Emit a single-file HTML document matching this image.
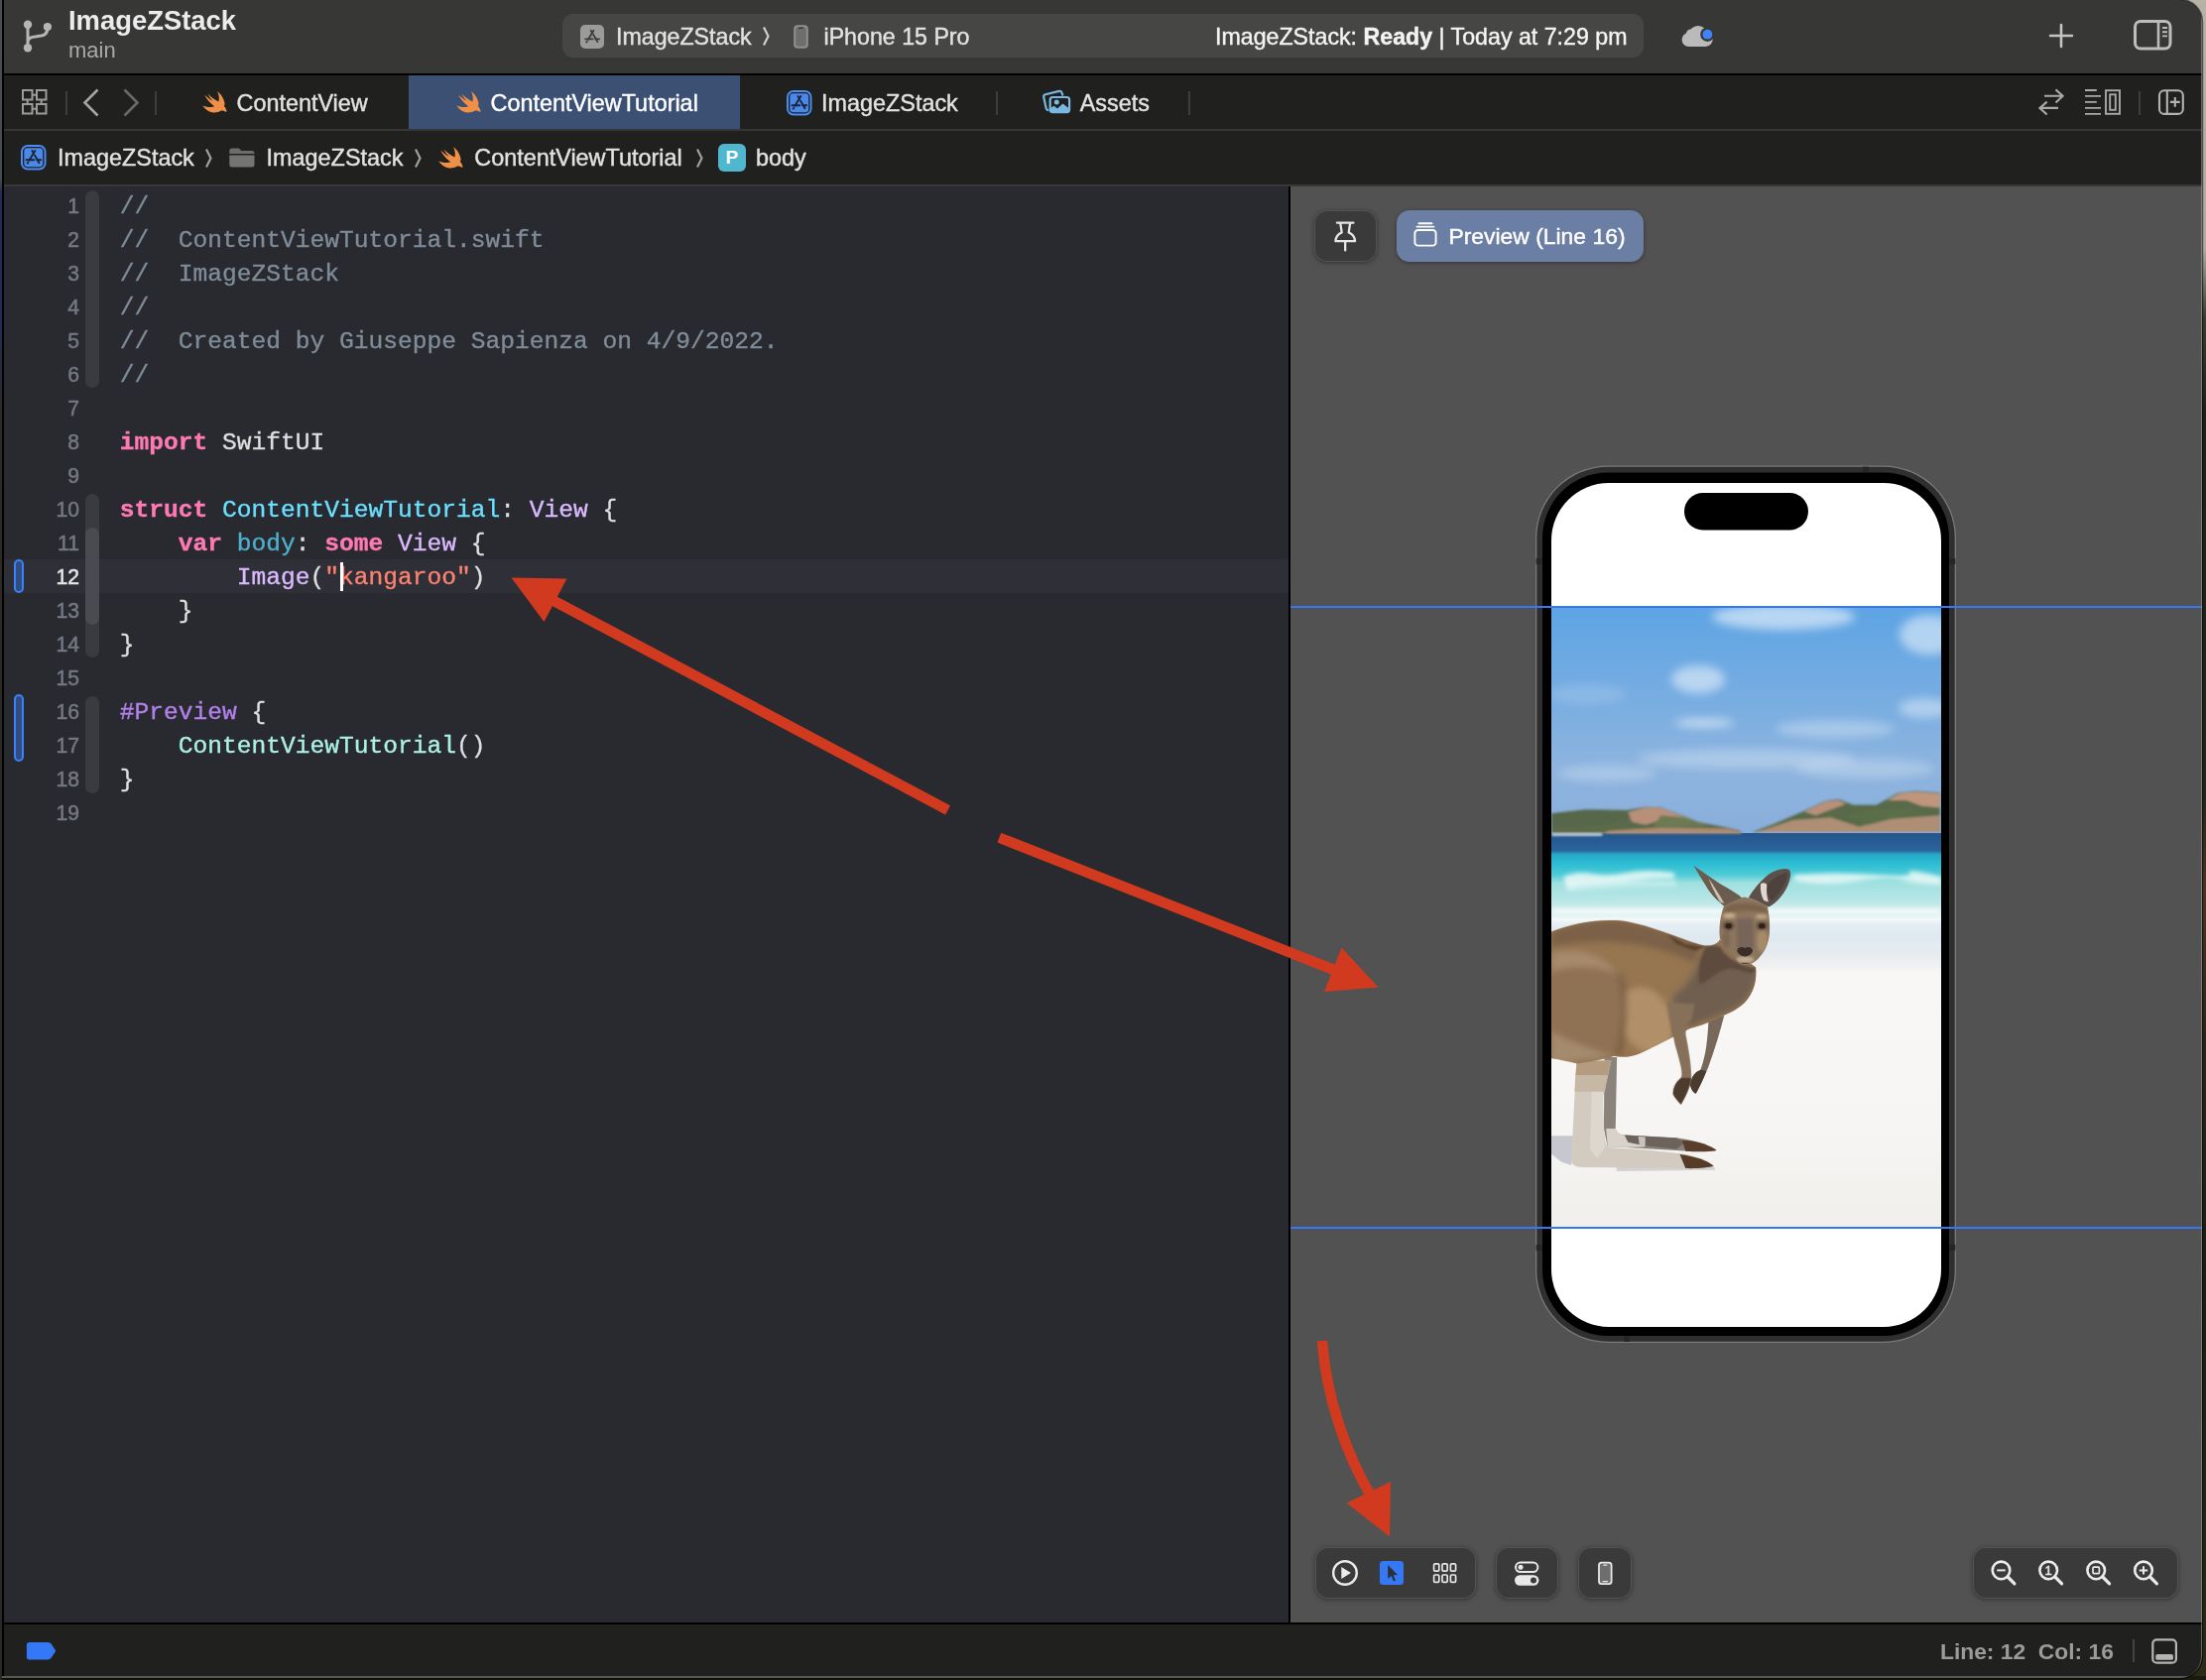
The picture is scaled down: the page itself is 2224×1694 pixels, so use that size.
<!DOCTYPE html>
<html lang="en">
<head>
<meta charset="utf-8">
<title>ImageZStack — ContentViewTutorial.swift</title>
<style>
*{box-sizing:border-box;margin:0;padding:0}
html,body{width:2224px;height:1694px;overflow:hidden;background:#000}
body{position:relative;font-family:"Liberation Sans",sans-serif;color:#dfdfdf}
.abs{position:absolute}
svg{position:absolute;overflow:visible}
.tx{position:absolute;white-space:pre;line-height:1}
#code,.tx,#pbadge,svg text{will-change:opacity}
#deskL{left:0;top:0;width:2px;height:1694px;background:linear-gradient(#4a4f53 0,#454b52 180px,#232c52 195px,#232c52 330px,#2e2a24 420px,#2a2825 100%)}
#deskR{left:2200px;top:0;width:24px;height:1694px;background:linear-gradient(#b7b2a6 0,#aeaa9e 250px,#3a3c30 320px,#1d2019 420px,#23251a 800px,#4a3420 900px,#2a2418 1050px,#1b1d15 1300px,#2b2a17 1694px)}
#deskB{left:0;top:1690px;width:2224px;height:4px;background:#1b1a10}
#win{left:0;top:0;width:2220px;height:1692px;background:#000;border-radius:0 22px 22px 0;overflow:hidden;box-shadow:0 0 0 1.2px rgba(0,0,0,.55)}
#winedge{left:-30px;top:-5px;width:2250px;height:1697px;border-radius:0 22px 22px 0;border-style:solid;border-color:rgba(170,170,170,.5);border-width:0 1.5px 0 0;pointer-events:none}
#toolbar{left:4px;top:0;width:2216px;height:73.6px;background:#373735}
#tabbar{left:4px;top:76px;width:2216px;height:54px;background:#20201f}
#tabline{left:4px;top:130px;width:2216px;height:2px;background:#363636}
#crumbs{left:4px;top:132px;width:2216px;height:54px;background:#20201f}
#crumbline{left:4px;top:186px;width:2216px;height:2px;background:#383838}
#editor{left:4px;top:188px;width:1295px;height:1448px;background:#292a30}
#canvas{left:1301px;top:188px;width:919px;height:1448px;background:#525252;overflow:hidden}
#status{left:4px;top:1638px;width:2216px;height:52px;background:#20201f}
#winbot{left:0;top:1690px;width:2220px;height:2px;background:#585858}

#code{left:0;top:0;width:2224px;height:1694px;font-family:"Liberation Mono",monospace;font-size:24.58px;color:#dfdfe0;white-space:pre;-webkit-text-stroke:.35px currentColor}
.ln{position:absolute;left:4px;height:34px;line-height:34px;width:1295px}
.ln .n{position:absolute;left:0;width:76px;text-align:right;color:#747880;font-size:22.5px;font-family:"Liberation Sans",sans-serif;transform:scaleX(.94);transform-origin:100% 50%;-webkit-text-stroke:.55px currentColor;top:-1.0px}
.ln .t{position:absolute;left:116.8px}
.ln.cur{background:#2f3037}
.ln.cur .n{color:#e6e6e6}
.c{color:#7f8c98}.k{color:#ff7ab2;font-weight:bold}.ty{color:#6bdfff}.sy{color:#dabaff}.pr{color:#4eb0cc}.st{color:#ff8170}.mc{color:#b281eb}.pj{color:#acf2e4}
.rib{position:absolute;left:86px;width:14px;border-radius:7px;background:#3a3b41}
.rib2{background:#4a4b50}
.chg{position:absolute;left:14px;width:10.2px;border:2.4px solid #3b82f6;border-radius:5.1px;background:#314c80}
#caret{position:absolute;width:3px;height:29px;background:#fff}

.t1{color:#e2e2e2;font-size:23.4px;-webkit-text-stroke:.4px currentColor}
#ttl{left:69px;top:7px;font-size:27.4px;font-weight:bold;color:#ececec}
#br{left:69px;top:39.5px;font-size:22px;color:#a9a9a7}
#pill{left:567px;top:14px;width:1090px;height:44px;border-radius:11px;background:#464644}
#acttab{left:412px;top:76px;width:334px;height:54px;background:#3c5073}
.sep{position:absolute;width:2px;height:24px;background:#3d3d3c}
.chev{position:absolute;font-size:22px;color:#9a9a98}
#pbadge{left:724px;top:145px;width:27.5px;height:27.5px;border-radius:6px;background:#4fb8cf;color:#fff;font-weight:bold;font-size:19px;text-align:center;line-height:27.5px}
#stat{color:#9b9b9a;font-size:22.8px;font-weight:bold}

.cbtn{position:absolute;background:#3a3a3a;border-radius:13px;box-shadow:0 0 0 1px rgba(255,255,255,.13) inset,0 1px 5px rgba(0,0,0,.4)}
#pvbtn{left:1408px;top:212px;width:249px;height:52px;border-radius:13px;background:#6b7fa5;box-shadow:0 1px 4px rgba(0,0,0,.35)}
.bl{position:absolute;left:1301px;width:919px;height:2px;background:#3478f6}
</style>
</head>
<body>
<div id="deskR" class="abs"></div>
<div id="deskB" class="abs"></div>
<div id="win" class="abs">
<div id="toolbar" class="abs"></div>
<div id="tabbar" class="abs"></div>
<div id="tabline" class="abs"></div>
<div id="crumbs" class="abs"></div>
<div id="crumbline" class="abs"></div>
<div id="editor" class="abs"><div class="abs" style="left:-4px;top:-188px;width:2224px;height:1694px">
<div id="code" class="abs">
<div class="ln cur" style="top:564.30px;height:33.6px"></div>
<div class="rib " style="top:192.0px;height:199.0px"></div>
<div class="rib " style="top:498.0px;height:165.3px"></div>
<div class="rib rib2" style="top:531.7px;height:97.9px"></div>
<div class="rib " style="top:702.0px;height:98.0px"></div>
<div class="ln" style="top:191.93px"><span class="n">1</span><span class="t"><span class="c">//</span></span></div>
<div class="ln" style="top:225.96px"><span class="n">2</span><span class="t"><span class="c">//  ContentViewTutorial.swift</span></span></div>
<div class="ln" style="top:259.99px"><span class="n">3</span><span class="t"><span class="c">//  ImageZStack</span></span></div>
<div class="ln" style="top:294.02px"><span class="n">4</span><span class="t"><span class="c">//</span></span></div>
<div class="ln" style="top:328.05px"><span class="n">5</span><span class="t"><span class="c">//  Created by Giuseppe Sapienza on 4/9/2022.</span></span></div>
<div class="ln" style="top:362.08px"><span class="n">6</span><span class="t"><span class="c">//</span></span></div>
<div class="ln" style="top:396.11px"><span class="n">7</span><span class="t"></span></div>
<div class="ln" style="top:430.14px"><span class="n">8</span><span class="t"><span class="k">import</span> SwiftUI</span></div>
<div class="ln" style="top:464.17px"><span class="n">9</span><span class="t"></span></div>
<div class="ln" style="top:498.20px"><span class="n">10</span><span class="t"><span class="k">struct</span> <span class="ty">ContentViewTutorial</span>: <span class="sy">View</span> {</span></div>
<div class="ln" style="top:532.23px"><span class="n">11</span><span class="t">    <span class="k">var</span> <span class="pr">body</span>: <span class="k">some</span> <span class="sy">View</span> {</span></div>
<div class="ln" style="top:566.26px"><span class="n" style='color:#e6e6e6'>12</span><span class="t">        <span class="sy">Image</span>(<span class="st">"kangaroo"</span>)</span></div>
<div class="ln" style="top:600.29px"><span class="n">13</span><span class="t">    }</span></div>
<div class="ln" style="top:634.32px"><span class="n">14</span><span class="t">}</span></div>
<div class="ln" style="top:668.35px"><span class="n">15</span><span class="t"></span></div>
<div class="ln" style="top:702.38px"><span class="n">16</span><span class="t"><span class="mc">#Preview</span> {</span></div>
<div class="ln" style="top:736.41px"><span class="n">17</span><span class="t">    <span class="pj">ContentViewTutorial</span>()</span></div>
<div class="ln" style="top:770.44px"><span class="n">18</span><span class="t">}</span></div>
<div class="ln" style="top:804.47px"><span class="n">19</span><span class="t"></span></div>
<div class="chg" style="top:564.3px;height:33.7px"></div>
<div class="chg" style="top:700.3px;height:67.7px"></div>
<div id="caret" style="left:342.6px;top:567.0px"></div>
</div>
</div></div>
<div id="canvas" class="abs"><div class="abs" style="left:-1301px;top:-188px;width:2224px;height:1694px">
<div class="cbtn" style="left:1325px;top:212px;width:63px;height:52px"></div>
<svg style="left:1340px;top:218px" width="32" height="40" viewBox="1340 218 32 40"><g fill="none" stroke="#e6e6e6" stroke-width="2.3" stroke-linejoin="round" stroke-linecap="round"><path d="M1347.9 224.6 H1364.5 M1351.2 224.6 L1352.7 234.4 C1349 236 1346.7 239 1346.4 243.2 H1366.1 C1365.8 239 1363.4 236 1359.7 234.4 L1361.2 224.6 M1356.2 243.2 V252.4"/></g></svg>
<div id="pvbtn" class="abs"></div>
<svg style="left:1425px;top:224px" width="24" height="25" viewBox="0 0 24 25"><g fill="none" stroke="#fff" stroke-width="1.9" stroke-linecap="round"><path d="M5.5 1.2 H18.5 M3.5 4.6 H20.5"/><rect x="1.4" y="8" width="21.2" height="15.6" rx="3.2"/></g></svg>
<div class="tx" style="left:1460.4px;top:226.5px;font-size:22.9px;color:#fff;-webkit-text-stroke:.4px #fff">Preview (Line 16)</div>
<svg style="left:1540px;top:462px" width="440" height="900" viewBox="1540 462 440 900">
<defs>
<linearGradient id="sky" x1="0" y1="0" x2="0" y2="1"><stop offset="0" stop-color="#5ea4e4"/><stop offset=".35" stop-color="#74ace2"/><stop offset=".7" stop-color="#8db4df"/><stop offset="1" stop-color="#8aaedb"/></linearGradient>
<linearGradient id="sea" x1="0" y1="0" x2="0" y2="1"><stop offset="0" stop-color="#25558d"/><stop offset=".125" stop-color="#2a649b"/><stop offset=".155" stop-color="#25a9c8"/><stop offset=".22" stop-color="#2cbdd3"/><stop offset=".30" stop-color="#4fcbd6"/><stop offset=".36" stop-color="#9fe0e0"/><stop offset=".48" stop-color="#b8e6e6"/><stop offset=".58" stop-color="#d3edee"/><stop offset=".62" stop-color="#f4f8f8"/><stop offset=".68" stop-color="#dde9f0"/><stop offset=".82" stop-color="#e0e8ef"/><stop offset=".95" stop-color="#f0f0f1"/><stop offset="1" stop-color="#f8f7f6"/></linearGradient>
<linearGradient id="sand" x1="0" y1="0" x2="0" y2="1"><stop offset="0" stop-color="#f8f7f6"/><stop offset=".6" stop-color="#f6f5f3"/><stop offset="1" stop-color="#f1efec"/></linearGradient>
<linearGradient id="fur" x1="0" y1="0" x2="0" y2="1"><stop offset="0" stop-color="#8a6a4b"/><stop offset=".5" stop-color="#96744f"/><stop offset="1" stop-color="#a78a68"/></linearGradient>
<filter id="b2" x="-20%" y="-20%" width="140%" height="140%"><feGaussianBlur stdDeviation="2"/></filter>
<filter id="b4" x="-30%" y="-30%" width="160%" height="160%"><feGaussianBlur stdDeviation="5"/></filter>
<filter id="hb" x="-5%" y="-20%" width="110%" height="140%"><feGaussianBlur stdDeviation="5"/></filter>
<filter id="b1" x="-10%" y="-10%" width="120%" height="120%"><feGaussianBlur stdDeviation="0.7"/></filter>
<clipPath id="scr"><rect x="1564" y="487" width="393" height="851" rx="58"/></clipPath>
<clipPath id="pho"><rect x="1564" y="613" width="393" height="624"/></clipPath>
</defs>
<rect x="1548" y="469.5" width="424" height="884.5" rx="73" fill="#7a7a7a"/>
<rect x="1549.3" y="470.8" width="421.4" height="881.9" rx="71.7" fill="#2f2f2f"/>
<rect x="1555" y="476.5" width="410" height="870.5" rx="66" fill="#000"/>
<rect x="1548.6" y="563" width="6" height="6" fill="#262626"/><rect x="1965.4" y="563" width="6" height="6" fill="#262626"/>
<rect x="1548.6" y="1255" width="6" height="6" fill="#262626"/><rect x="1878" y="470.6" width="6" height="5.6" fill="#262626"/><rect x="1637" y="1347.4" width="6" height="5.6" fill="#262626"/><rect x="1965.4" y="1255" width="6" height="6" fill="#262626"/>
<rect x="1564" y="487" width="393" height="851" rx="58" fill="#fff"/>
<rect x="1698" y="497" width="125" height="37.5" rx="18.7" fill="#000"/>
<g clip-path="url(#pho)">
<rect x="1564" y="613" width="393" height="228" fill="url(#sky)"/>
<g filter="url(#b4)" fill="#fff">
<ellipse cx="1798" cy="622" rx="72" ry="13" opacity=".55"/>
<ellipse cx="1945" cy="640" rx="30" ry="20" opacity=".5"/>
<ellipse cx="1712" cy="685" rx="27" ry="14" opacity=".5"/>
<ellipse cx="1718" cy="729" rx="30" ry="4" opacity=".6"/>
<ellipse cx="1940" cy="714" rx="26" ry="10" opacity=".4"/>
<ellipse cx="1850" cy="735" rx="60" ry="9" opacity=".3"/>
<ellipse cx="1760" cy="765" rx="110" ry="10" opacity=".28"/>
<ellipse cx="1620" cy="780" rx="50" ry="8" opacity=".25"/>
<ellipse cx="1880" cy="775" rx="70" ry="10" opacity=".25"/>
<ellipse cx="1600" cy="700" rx="40" ry="10" opacity=".15"/>
</g>
<rect x="1564" y="840" width="393" height="140" fill="url(#sea)"/>
<rect x="1564" y="979.5" width="393" height="258" fill="url(#sand)"/>
<g transform="translate(1560 605) scale(.190476)" filter="url(#hb)">
<path d="M22 1130 L200 1110 L420 1112 L520 1095 L600 1098 L700 1135 L800 1175 L950 1205 L1020 1222 L1030 1236 L22 1236 Z" fill="#5a6b4c"/>
<path d="M420 1125 L520 1098 L600 1100 L700 1138 L780 1172 L700 1180 L600 1165 L520 1190 L450 1175 Z" fill="#b8907a"/>
<path d="M320 1222 L600 1205 L950 1210 L1020 1225 L1030 1237 L300 1237 Z" fill="#ad8b72"/>
<path d="M22 1130 L200 1110 L420 1112 L440 1150 L300 1190 L22 1200 Z" fill="#566848"/>
<path d="M600 1140 L720 1150 L860 1195 L700 1200 L560 1200 Z" fill="#6d7a52"/>
<path d="M22 1236 H290 V1248 H22 Z" fill="#e8eef0"/>
<path d="M1085 1228 L1200 1185 L1350 1120 L1470 1065 L1540 1055 L1620 1085 L1740 1085 L1860 1020 L1950 1012 L2078 1020 L2078 1228 Z" fill="#586b49"/>
<path d="M1360 1120 L1470 1068 L1540 1060 L1580 1080 L1500 1110 L1420 1140 Z" fill="#b9917a"/>
<path d="M1800 1060 L1870 1022 L1950 1015 L2078 1024 L2078 1100 L1980 1090 L1900 1060 Z" fill="#bf967d"/>
<path d="M1150 1215 L1300 1165 L1500 1150 L1650 1200 L1800 1160 L2078 1140 L2078 1228 L1100 1228 Z" fill="#b8927a" opacity=".9"/>
<path d="M1560 1150 L1700 1110 L1900 1100 L2000 1130 L1850 1150 L1700 1190 Z" fill="#5a6e4a"/>
</g>
<g filter="url(#b2)" fill="#e4f7f5">
<path d="M1576 884 Q1590 878 1605 881 T1640 880 T1688 880 L1688 886 Q1660 886 1640 889 T1605 892 T1580 897 Z" opacity=".9"/>
<path d="M1580 892 Q1620 888 1690 888 L1690 894 Q1630 894 1582 899 Z" opacity=".5"/>
<path d="M1808 882 Q1850 879 1890 882 T1925 880 T1957 884 V892 Q1935 892 1920 888 T1870 889 T1808 888 Z" opacity=".9"/>
<rect x="1564" y="915.5" width="393" height="7" fill="#f4fafa" opacity=".85"/>
<rect x="1564" y="935" width="393" height="3" fill="#f4f8fb" opacity=".5"/>
<rect x="1780" y="952" width="177" height="3" fill="#f6f9fb" opacity=".5"/>
</g>
<g transform="translate(1560 850) scale(.232198)">
<defs>
<clipPath id="bodyc"><path d="M17 935 L17 385 C120 345 250 325 350 342 C450 360 560 410 660 440 C700 452 735 445 748 420 L905 540 C910 600 895 650 860 690 C830 720 790 740 765 748 C720 775 660 795 620 805 C560 835 470 880 400 915 C360 932 320 932 290 925 C250 940 180 952 130 958 C90 950 50 938 17 935 Z"/></clipPath>
<filter id="sb" x="-30%" y="-30%" width="160%" height="160%"><feGaussianBlur stdDeviation="14"/></filter>
<filter id="sb2" x="-30%" y="-30%" width="160%" height="160%"><feGaussianBlur stdDeviation="5"/></filter>
<filter id="sb3" x="-10%" y="-10%" width="120%" height="120%"><feGaussianBlur stdDeviation="2.2"/></filter>
</defs>
<g filter="url(#sb3)">
<path d="M17 1272 L112 1272 L104 1400 L60 1385 L17 1350 Z" fill="#c6c8cf"/>
<path d="M300 1395 L720 1400 L730 1420 L300 1425 Z" fill="#d2d2d5"/>
<path d="M248 930 L302 930 L296 1240 C300 1262 320 1268 340 1268 L560 1280 C640 1290 710 1315 735 1335 C700 1342 640 1340 560 1335 L340 1322 L262 1322 L245 1240 Z" fill="#8a837b"/>
<path d="M255 1240 L296 1240 C300 1262 320 1268 340 1268 L420 1275 L420 1320 L262 1322 Z" fill="#d8d2c8"/>
<path d="M335 1268 L560 1281 L600 1300 L560 1330 L420 1315 L350 1300 Z" fill="#6c645c"/>
<path d="M395 1275 L425 1277 L425 1318 L400 1315 Z" fill="#c9c2b8"/>
<path d="M585 1292 C650 1290 710 1315 735 1335 C700 1342 650 1342 600 1338 Z" fill="#5a3d2a"/>
<path d="M128 945 L118 1100 L108 1300 L103 1375 C105 1400 125 1408 150 1408 L590 1413 C650 1415 700 1410 722 1403 C700 1380 650 1362 590 1350 L420 1332 L262 1322 C245 1300 240 1200 242 1100 L278 945 Z" fill="#d3cbbf"/>
<path d="M185 960 L192 1100 L185 1330 L215 1370 L250 1322 L240 1100 L268 960 Z" fill="#e2dcd3" opacity=".7"/>
<path d="M128 945 L278 945 L262 1010 L122 1010 Z" fill="#b49c80"/><path d="M122 1010 L262 1010 L250 1080 L118 1080 Z" fill="#c6b8a4"/>
<path d="M575 1352 C640 1360 700 1380 722 1403 C700 1410 650 1415 600 1413 Z" fill="#573a27"/>
<path d="M700 770 C695 850 690 920 665 985 C645 995 628 1005 620 1050 C625 1075 635 1085 645 1088 C660 1060 680 1020 700 970 C725 900 750 820 768 748 Z" fill="#77675a"/>
<path d="M665 985 C645 995 628 1005 620 1050 C625 1075 635 1085 645 1088 C660 1060 680 1020 690 990 Z" fill="#4a3a2f"/>
</g>
<g filter="url(#sb3)">
<path d="M17 935 L17 385 C120 345 250 325 350 342 C450 360 560 410 660 440 C700 452 735 445 748 420 L905 540 C910 600 895 650 860 690 C830 720 790 740 765 748 C720 775 660 795 620 805 C560 835 470 880 400 915 C360 932 320 932 290 925 C250 940 180 952 130 958 C90 950 50 938 17 935 Z" fill="#957651"/>
</g>
<g clip-path="url(#bodyc)">
<g filter="url(#sb)">
<path d="M17 385 C120 345 250 325 350 342 C450 360 560 410 660 440 L640 520 C500 450 300 400 17 450 Z" fill="#7c6046"/>
<ellipse cx="430" cy="770" rx="110" ry="150" fill="#b19069" transform="rotate(-25 430 770)"/>
<path d="M17 480 C120 460 250 490 300 570 C335 650 320 800 290 925 L17 935 Z" fill="#8f7152"/>
<path d="M17 480 C120 450 250 480 300 570 C250 540 120 520 17 560 Z" fill="#a68a6c"/>
<path d="M17 820 C100 860 200 900 290 925 L17 960 Z" fill="#a58b6e"/>
<path d="M300 560 C335 650 325 800 292 925 L320 925 C350 800 350 650 330 580 Z" fill="#7b5f45"/>
<path d="M690 440 C730 450 750 440 760 470 C780 500 850 540 915 545 C905 610 880 670 830 710 C780 740 700 760 640 790 C560 820 520 700 560 650 C640 600 660 500 690 440 Z" fill="#6f5e50"/>
</g>
<g filter="url(#sb2)">
<path d="M690 450 C730 450 750 440 760 470 C780 500 850 540 905 545 C900 580 860 560 800 545 C740 545 700 610 660 610 C650 540 670 480 690 450 Z" fill="#5f4c3d"/>
<path d="M520 395 L600 440 L690 450 L640 468 L560 438 Z" fill="#59432f"/>
<path d="M520 690 C525 760 540 820 555 880 L600 830 C600 800 610 780 625 770 L640 700 Z" fill="#86705a"/>
</g>
</g>
<g filter="url(#sb3)">
<path d="M540 800 C545 830 550 860 555 880 C575 950 590 1000 580 1020 C560 1035 545 1060 545 1090 C555 1110 570 1125 580 1135 C600 1100 620 1060 625 1020 C625 960 610 880 600 830 C600 810 605 795 612 785 Z" fill="#86705a"/>
<path d="M580 1020 C560 1035 545 1060 545 1090 C555 1110 570 1125 580 1135 C600 1100 620 1060 625 1020 Z" fill="#4e3b2d"/>
</g>
</g>
<g transform="translate(1690 860) scale(.0774)">
<defs><filter id="hf" x="-10%" y="-10%" width="120%" height="120%"><feGaussianBlur stdDeviation="9"/></filter><filter id="hf2" x="-20%" y="-20%" width="140%" height="140%"><feGaussianBlur stdDeviation="22"/></filter><clipPath id="hc"><path d="M620 690 C700 640 800 600 880 575 C960 590 1100 640 1185 695 C1210 800 1225 950 1212 1060 C1200 1180 1150 1290 1090 1350 C1040 1420 960 1465 890 1462 C820 1455 780 1400 760 1350 C680 1300 600 1220 570 1120 C550 1000 570 820 620 690 Z"/></clipPath></defs>
<g filter="url(#hf)">
<path d="M225 160 C300 220 480 340 600 420 C700 480 800 530 870 600 C800 640 700 680 620 690 C540 630 440 530 380 420 C320 320 260 230 225 160 Z" fill="#6b5b50"/>
<path d="M420 330 C480 420 560 540 625 660 L570 640 C520 560 460 440 420 330 Z" fill="#cdbfb2"/>
<path d="M940 585 C1000 480 1100 360 1200 280 C1300 215 1400 190 1470 215 C1510 260 1480 400 1400 520 C1330 620 1260 680 1200 705 C1120 660 1020 610 940 585 Z" fill="#5d5048"/>
<path d="M1180 420 C1260 330 1380 260 1450 260 C1450 360 1380 500 1250 620 C1200 600 1180 500 1180 420 Z" fill="#4d433d"/>
<path d="M1100 400 C1140 380 1170 390 1180 420 C1170 500 1180 580 1200 640 L1140 620 C1100 540 1090 460 1100 400 Z" fill="#e1d8cf"/>
<path d="M620 690 C700 640 800 600 880 575 C960 590 1100 640 1185 695 C1210 800 1225 950 1212 1060 C1200 1180 1150 1290 1090 1350 C1040 1420 960 1465 890 1462 C820 1455 780 1400 760 1350 C680 1300 600 1220 570 1120 C550 1000 570 820 620 690 Z" fill="#8c745d"/>
</g>
<g clip-path="url(#hc)"><g filter="url(#hf2)">
<path d="M640 700 C760 640 1000 640 1170 710 L1180 790 C1000 740 800 740 620 790 Z" fill="#7a624c"/>
<ellipse cx="690" cy="820" rx="85" ry="34" fill="#c6ae8c"/>
<ellipse cx="1110" cy="830" rx="80" ry="32" fill="#bfa684"/>
<path d="M790 860 L1000 860 L1010 1250 L790 1250 Z" fill="#78655a"/>
<ellipse cx="1120" cy="1150" rx="70" ry="150" fill="#a68b69"/>
<ellipse cx="650" cy="1130" rx="50" ry="120" fill="#7d6855"/>
<ellipse cx="895" cy="1390" rx="120" ry="40" fill="#c2ae97"/>
<ellipse cx="680" cy="950" rx="75" ry="60" fill="#5d4a3b"/><ellipse cx="1115" cy="950" rx="75" ry="60" fill="#5d4a3b"/>
</g></g>
<g filter="url(#hf)">
<ellipse cx="680" cy="952" rx="42" ry="36" fill="#2f241d"/>
<ellipse cx="1115" cy="952" rx="42" ry="36" fill="#2f241d"/>
<path d="M790 1270 C800 1230 860 1215 895 1240 C930 1215 985 1230 995 1270 C990 1320 940 1350 895 1350 C850 1350 800 1320 790 1270 Z" fill="#3a2d29"/>
<path d="M850 1440 L940 1440" stroke="#5a473b" stroke-width="14"/>
</g>
</g>

</g>
</svg>
<div class="bl" style="top:611px"></div>
<div class="bl" style="top:1237px"></div>
<div class="cbtn" style="left:1325.5px;top:1560px;width:162.5px;height:52px"></div>
<div class="cbtn" style="left:1508px;top:1560px;width:63px;height:52px"></div>
<div class="cbtn" style="left:1591px;top:1560px;width:54px;height:52px"></div>
<div class="cbtn" style="left:1988.5px;top:1560px;width:207px;height:52px"></div>
<svg style="left:1325px;top:1560px" width="330" height="52" viewBox="1325 1560 330 52">
<circle cx="1356" cy="1586" r="11.8" fill="none" stroke="#ebebeb" stroke-width="2.4"/><path d="M1352.3 1580 L1362 1586 L1352.3 1592 Z" fill="#ebebeb"/>
<rect x="1391" y="1574" width="24" height="24" rx="3.5" fill="#3478f6"/>
<path d="M1399.2 1578 L1399.2 1592 L1402.6 1589 L1405 1594.6 L1407 1593.7 L1404.7 1588.3 L1409 1588 Z" fill="#2b2f3a"/>
<g fill="none" stroke="#e6e6e6" stroke-width="1.7"><rect x="1445.6" y="1576.8" width="5.2" height="7.4" rx="1.2"/><rect x="1454" y="1576.8" width="5.2" height="7.4" rx="1.2"/><rect x="1462.4" y="1576.8" width="5.2" height="7.4" rx="1.2"/><rect x="1445.6" y="1588" width="5.2" height="7.4" rx="1.2"/><rect x="1454" y="1588" width="5.2" height="7.4" rx="1.2"/><rect x="1462.4" y="1588" width="5.2" height="7.4" rx="1.2"/></g>
<rect x="1528" y="1575.5" width="22.4" height="9.6" rx="4.8" fill="none" stroke="#e8e8e8" stroke-width="2"/><circle cx="1533" cy="1580.3" r="2.5" fill="#e8e8e8"/>
<rect x="1527" y="1588.3" width="24.4" height="10.4" rx="5.2" fill="#e8e8e8"/><circle cx="1546" cy="1593.5" r="3" fill="#3a3a3a"/>
<rect x="1612" y="1575.6" width="12.6" height="21.6" rx="2.6" fill="#6e6e6e" stroke="#e8e8e8" stroke-width="1.8"/><path d="M1616.4 1578.2 H1620.2 M1615.6 1594.6 H1621" stroke="#e8e8e8" stroke-width="1.2"/>
</svg>
<svg style="left:1988px;top:1560px" width="208" height="52" viewBox="1988 1560 208 52"><g><circle cx="2017.5" cy="1583.4" r="8.8" fill="none" stroke="#ebebeb" stroke-width="2.6"/><path d="M2024.1 1590 L2030.9 1596.8" stroke="#ebebeb" stroke-width="3.2" stroke-linecap="round"/><path d="M2013.3 1583.4 H2021.7" stroke="#ebebeb" stroke-width="2"/></g><g><circle cx="2065.2" cy="1583.4" r="8.8" fill="none" stroke="#ebebeb" stroke-width="2.6"/><path d="M2071.7999999999997 1590 L2078.6 1596.8" stroke="#ebebeb" stroke-width="3.2" stroke-linecap="round"/><text x="2065.1" y="1588.2" text-anchor="middle" font-family="Liberation Sans, sans-serif" font-size="13" fill="#ebebeb" stroke="#ebebeb" stroke-width=".4" text-rendering="geometricPrecision">1</text></g><g><circle cx="2113.2" cy="1583.4" r="8.8" fill="none" stroke="#ebebeb" stroke-width="2.6"/><path d="M2119.7999999999997 1590 L2126.6 1596.8" stroke="#ebebeb" stroke-width="3.2" stroke-linecap="round"/><rect x="2110" y="1580.2" width="6.4" height="6.4" rx="1" fill="none" stroke="#ebebeb" stroke-width="1.7"/></g><g><circle cx="2161" cy="1583.4" r="8.8" fill="none" stroke="#ebebeb" stroke-width="2.6"/><path d="M2167.6 1590 L2174.4 1596.8" stroke="#ebebeb" stroke-width="3.2" stroke-linecap="round"/><path d="M2156.8 1583.4 H2165.2 M2161 1579.2 V1587.6" stroke="#ebebeb" stroke-width="2"/></g></svg>
</div></div>
<div id="status" class="abs"></div>
<div id="winbot" class="abs"></div>
<svg style="left:20px;top:18px" width="36" height="38" viewBox="20 18 36 38"><g fill="#b6b6b4"><circle cx="28" cy="24.7" r="4.2"/><circle cx="47.9" cy="27.1" r="4.1"/><circle cx="28" cy="48.2" r="4.2"/></g><path d="M28 25 V48 M28 43 C28 37.5 32 37.3 38 36.6 C44 36 47.9 35 47.9 28" fill="none" stroke="#b6b6b4" stroke-width="3"/></svg>
<div id="ttl" class="tx">ImageZStack</div>
<div id="br" class="tx">main</div>
<div id="pill" class="abs"></div>
<svg style="left:584.5px;top:24.5px" width="24" height="24" viewBox="0 0 26 26"><rect x="0" y="0" width="26" height="26" rx="5.5" fill="#9b9b99"/><g stroke="#3b3b3a" stroke-width="1.9" stroke-linecap="round" fill="none"><path d="M14.6 6.2 L8.6 16"/><path d="M11.6 6.2 L13 8.4"/><path d="M14.2 10.6 L18.8 18.6"/><path d="M5.6 15.6 H13.6"/><path d="M16.6 15.6 H20.6"/><path d="M7.4 18.2 L6.8 19"/></g></svg>
<div class="tx t1" style="left:621px;top:26px;font-size:23.2px">ImageZStack</div>
<svg style="left:768px;top:26px" width="9" height="21" viewBox="0 0 9 21"><path d="M2 1.5 L6.5 10.5 L2 19.5" fill="none" stroke="#d0d0ce" stroke-width="2.2"/></svg>
<svg style="left:800px;top:25px" width="15" height="24" viewBox="0 0 15 24"><rect x="1.2" y="1.2" width="12.6" height="21.6" rx="3" fill="#6e6e6c" stroke="#90908e" stroke-width="2"/><rect x="5" y="2.4" width="5" height="1.6" rx=".8" fill="#373735"/></svg>
<div class="tx t1" style="left:830.5px;top:26px;font-size:23.2px">iPhone 15 Pro</div>
<div class="tx t1" id="stt" style="left:1225px;top:26px;font-size:23.2px;color:#f4f4f4">ImageZStack: <b>Ready</b> | Today at 7:29 pm</div>
<svg style="left:1694px;top:22px" width="36" height="28" viewBox="1694 22 36 28"><g fill="#bababa"><circle cx="1702.6" cy="40" r="7"/><circle cx="1712" cy="35.2" r="9.3"/><circle cx="1704.6" cy="34" r="4.6"/><circle cx="1719.4" cy="39.6" r="7.4"/><rect x="1702.6" y="40" width="16.8" height="7"/></g><circle cx="1721.4" cy="34.7" r="7.2" fill="#373735"/><circle cx="1721.4" cy="34.7" r="4.9" fill="#3f84f7"/></svg>
<svg style="left:2066px;top:24px" width="24" height="24" viewBox="0 0 24 24"><path d="M12 1 V23 M1 12 H23" stroke="#c4c4c2" stroke-width="2.6" stroke-linecap="round"/></svg>
<svg style="left:2150px;top:19px" width="41" height="33" viewBox="2150 19 41 33"><rect x="2152.5" y="21.5" width="35.5" height="27.5" rx="5.5" fill="none" stroke="#bdbdbb" stroke-width="3"/><path d="M2176 21.5 V49" stroke="#bdbdbb" stroke-width="2.6"/><path d="M2180 28 H2185 M2180 32.2 H2185 M2180 36.4 H2185" stroke="#bdbdbb" stroke-width="1.9"/></svg>
<div id="acttab" class="abs"></div>
<svg style="left:21px;top:89px" width="28" height="28" viewBox="21 89 28 28"><g fill="none" stroke="#9c9c9a" stroke-width="2"><rect x="23" y="91" width="9.5" height="9.5"/><rect x="37" y="91" width="9.5" height="9.5"/><rect x="23" y="105" width="9.5" height="9.5"/><rect x="37" y="105" width="9.5" height="9.5"/><path d="M32.5 95.7 H37 M41.7 100.5 V105 M32.5 109.7 H37 M27.7 100.5 V105" /></g></svg>
<div class="sep" style="left:66px;top:92px"></div>
<svg style="left:83px;top:89px" width="18" height="29" viewBox="0 0 18 29"><path d="M15.5 1.5 L2.5 14.5 L15.5 27.5" fill="none" stroke="#a5a5a3" stroke-width="2.6"/></svg>
<svg style="left:123px;top:89px" width="18" height="29" viewBox="0 0 18 29"><path d="M2.5 1.5 L15.5 14.5 L2.5 27.5" fill="none" stroke="#6a6a68" stroke-width="2.6"/></svg>
<div class="sep" style="left:156px;top:92px"></div>
<svg style="left:203.5px;top:92.4px" width="24.5" height="21.4" viewBox="540 350 675 590"><path d="M955 355 C1060 420 1140 560 1160 680 C1165 720 1150 750 1140 765 C1180 800 1215 860 1215 915 C1200 930 1170 925 1150 905 C1130 885 1090 880 1050 895 C1000 925 930 945 850 940 C720 935 610 840 545 740 C620 780 780 810 880 770 C780 700 660 570 605 450 C680 520 760 580 830 625 C770 560 720 480 690 420 C780 510 900 600 990 640 C1020 560 1000 440 955 355 Z" fill="#ee9048"/></svg>
<div class="tx t1" style="left:238.5px;top:93px">ContentView</div>
<svg style="left:459.6px;top:92.1px" width="24.5" height="21.4" viewBox="540 350 675 590"><path d="M955 355 C1060 420 1140 560 1160 680 C1165 720 1150 750 1140 765 C1180 800 1215 860 1215 915 C1200 930 1170 925 1150 905 C1130 885 1090 880 1050 895 C1000 925 930 945 850 940 C720 935 610 840 545 740 C620 780 780 810 880 770 C780 700 660 570 605 450 C680 520 760 580 830 625 C770 560 720 480 690 420 C780 510 900 600 990 640 C1020 560 1000 440 955 355 Z" fill="#ee9048"/></svg>
<div class="tx t1" style="left:494.5px;top:93px;color:#fff">ContentViewTutorial</div>
<svg style="left:793px;top:90.5px" width="25.5" height="25.5" viewBox="0 0 26 26"><rect x="1" y="1" width="24" height="24" rx="6" fill="#20201f" stroke="#4a8cf0" stroke-width="2"/><rect x="3.4" y="3.4" width="19.2" height="19.2" rx="3.4" fill="#4a88ea"/><g stroke="#1d2330" stroke-width="1.9" stroke-linecap="round" fill="none"><path d="M14.6 6.2 L8.6 16"/><path d="M11.6 6.2 L13 8.4"/><path d="M14.2 10.6 L18.8 18.6"/><path d="M5.6 15.6 H13.6"/><path d="M16.6 15.6 H20.6"/><path d="M7.4 18.2 L6.8 19"/></g></svg>
<div class="tx t1" style="left:828px;top:93px">ImageZStack</div>
<div class="sep" style="left:1004px;top:92px"></div>
<svg style="left:1050px;top:90px" width="30" height="25" viewBox="1050 90 30 25"><g fill="none" stroke="#79b8e0" stroke-width="2.2"><path d="M1071.5 96.5 L1070.6 93.6 a2.4 2.4 0 0 0 -2.9 -1.7 L1054 95.3 a2.4 2.4 0 0 0 -1.7 2.9 L1054.7 109.3 a2.4 2.4 0 0 0 2.6 1.8"/><rect x="1058.7" y="98" width="19.4" height="15.2" rx="2.6"/></g><circle cx="1065.3" cy="103" r="2.5" fill="#79b8e0"/><path d="M1059 109 L1062.6 106.8 L1066 109.4 L1071.5 104.4 L1078 109.6 V113 H1059 Z" fill="#79b8e0"/></svg>
<div class="tx t1" style="left:1088.7px;top:93px">Assets</div>
<div class="sep" style="left:1198px;top:92px"></div>
<svg style="left:2054px;top:89px" width="28" height="28" viewBox="2054 89 28 28"><g fill="none" stroke="#a9a9a7" stroke-width="2.1" stroke-linecap="butt" stroke-linejoin="miter"><path d="M2061 96.8 H2079.2 M2072.5 90.4 L2079.6 96.8 L2072.5 103.4"/><path d="M2075 108.9 H2056.6 M2063.7 102.6 L2056.4 108.9 L2063.7 115.6"/></g></svg>
<svg style="left:2100px;top:89px" width="40" height="28" viewBox="2100 89 40 28"><g fill="none" stroke="#a9a9a7" stroke-width="1.9"><path d="M2102 91 H2113.8 M2102 96.9 H2118 M2102 102.9 H2113.8 M2102 108.9 H2118 M2102 114.9 H2118"/><rect x="2123" y="91.2" width="14" height="23.6" /><rect x="2127.2" y="95.3" width="5.6" height="15.5"/></g></svg>
<div class="sep" style="left:2156px;top:92px"></div>
<svg style="left:2174px;top:89px" width="30" height="28" viewBox="2174 89 30 28"><g fill="none" stroke="#b3b3b1" stroke-width="2.1"><rect x="2177" y="91.3" width="23.8" height="23.6" rx="5"/><path d="M2184.8 91.3 V115"/><path d="M2192.8 98 V107.8 M2187.9 102.9 H2197.7" stroke-linecap="butt"/></g></svg>
<svg style="left:21px;top:146px" width="25.5" height="25.5" viewBox="0 0 26 26"><rect x="1" y="1" width="24" height="24" rx="6" fill="#20201f" stroke="#4a8cf0" stroke-width="2"/><rect x="3.4" y="3.4" width="19.2" height="19.2" rx="3.4" fill="#4a88ea"/><g stroke="#1d2330" stroke-width="1.9" stroke-linecap="round" fill="none"><path d="M14.6 6.2 L8.6 16"/><path d="M11.6 6.2 L13 8.4"/><path d="M14.2 10.6 L18.8 18.6"/><path d="M5.6 15.6 H13.6"/><path d="M16.6 15.6 H20.6"/><path d="M7.4 18.2 L6.8 19"/></g></svg>
<div class="tx t1" style="left:58px;top:147.5px">ImageZStack</div>
<svg style="left:206px;top:149px" width="9" height="21" viewBox="0 0 9 21"><path d="M2 1.5 L6.5 10.5 L2 19.5" fill="none" stroke="#a0a09e" stroke-width="2.2"/></svg>
<svg style="left:230.5px;top:148.5px" width="26" height="20" viewBox="0 0 26 20"><path d="M0.3 3 a2.5 2.5 0 0 1 2.5 -2.5 H9 a2.5 2.5 0 0 1 2 1 L12 3 H23 a2.5 2.5 0 0 1 2.5 2.5 V6 H0.3 Z" fill="#6d6d6c"/><path d="M0.3 7.6 H25.5 V17 a2.5 2.5 0 0 1 -2.5 2.5 H2.8 a2.5 2.5 0 0 1 -2.5 -2.5 Z" fill="#747473"/></svg>
<div class="tx t1" style="left:268.6px;top:147.5px">ImageZStack</div>
<svg style="left:417px;top:149px" width="9" height="21" viewBox="0 0 9 21"><path d="M2 1.5 L6.5 10.5 L2 19.5" fill="none" stroke="#a0a09e" stroke-width="2.2"/></svg>
<svg style="left:441.5px;top:148px" width="24.5" height="21.4" viewBox="540 350 675 590"><path d="M955 355 C1060 420 1140 560 1160 680 C1165 720 1150 750 1140 765 C1180 800 1215 860 1215 915 C1200 930 1170 925 1150 905 C1130 885 1090 880 1050 895 C1000 925 930 945 850 940 C720 935 610 840 545 740 C620 780 780 810 880 770 C780 700 660 570 605 450 C680 520 760 580 830 625 C770 560 720 480 690 420 C780 510 900 600 990 640 C1020 560 1000 440 955 355 Z" fill="#ee9048"/></svg>
<div class="tx t1" style="left:478.3px;top:147.5px">ContentViewTutorial</div>
<svg style="left:700.5px;top:149px" width="9" height="21" viewBox="0 0 9 21"><path d="M2 1.5 L6.5 10.5 L2 19.5" fill="none" stroke="#a0a09e" stroke-width="2.2"/></svg>
<div id="pbadge" class="abs">P</div>
<div class="tx t1" style="left:762px;top:147.5px">body</div>
<svg style="left:26px;top:1655px" width="32" height="20" viewBox="26 1655 32 20"><path d="M29.5 1656 H48.5 a4 4 0 0 1 3.3 1.8 L56.3 1664.7 L51.8 1671.6 a4 4 0 0 1 -3.3 1.8 H29.5 a2.6 2.6 0 0 1 -2.6 -2.6 V1658.6 a2.6 2.6 0 0 1 2.6 -2.6 Z" fill="#3478f6"/></svg>
<div class="tx" id="stat" style="left:1956px;top:1653.5px">Line: 12  Col: 16</div>
<div class="sep" style="left:2150px;top:1653px;height:23px;background:#444"></div>
<svg style="left:2168px;top:1651px" width="28" height="28" viewBox="2168 1651 28 28"><rect x="2170.3" y="1653.3" width="23.6" height="23.4" rx="4" fill="none" stroke="#b5b5b3" stroke-width="2.2"/><rect x="2173.3" y="1668" width="17.6" height="5.8" rx="1.6" fill="#b5b5b3"/></svg>

<svg style="left:0;top:0" width="2224" height="1694" viewBox="0 0 2224 1694">
<g fill="#d13a1f" stroke="none">
<path d="M515.5 582.5 L571.5 583.5 L548.5 627 Z"/>
<path d="M1389.5 995.6 L1352.5 955.6 L1335 1000 Z"/>
<path d="M1401 1549.5 L1357.6 1515.4 L1402 1494 Z"/>
</g>
<g fill="none" stroke="#d13a1f" stroke-width="10.5">
<path d="M553 603 L955.6 816.8"/>
<path d="M1007.4 844.6 L1350 980"/>
<path d="M1333 1352 C1337 1410 1358 1468 1383 1510"/>
</g>
</svg>

<div id="winedge" class="abs"></div>
</div>
<div id="deskL" class="abs"></div>
</body>
</html>
